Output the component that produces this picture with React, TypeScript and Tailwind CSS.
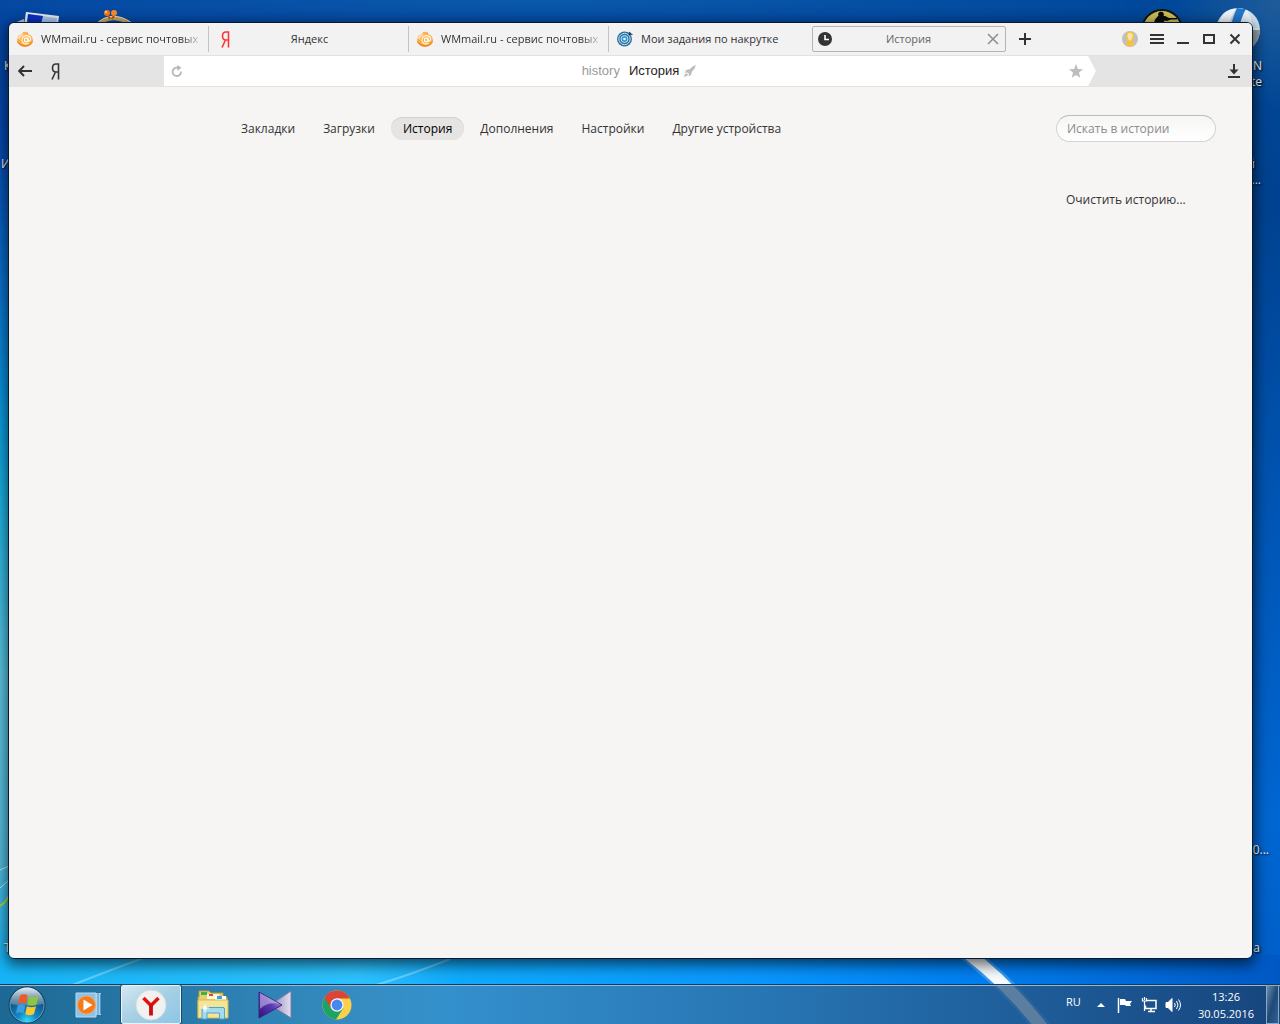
import type { ReactNode } from 'react';

const NAV_ITEMS = ['Закладки', 'Загрузки', 'История', 'Дополнения', 'Настройки', 'Другие устройства'];

function Wallpaper() {
  return (
    <svg
      className="absolute inset-0 h-full w-full"
      viewBox="0 0 1280 1024"
      preserveAspectRatio="none"
      aria-hidden="true"
    >
      <defs>
        <linearGradient id="wp-right" x1="0" y1="0" x2="0" y2="1">
          <stop offset="0" stopColor="#00489a" />
          <stop offset="0.2" stopColor="#004290" />
          <stop offset="0.5" stopColor="#0055b4" />
          <stop offset="0.8" stopColor="#0066d2" />
          <stop offset="1" stopColor="#005cc4" />
        </linearGradient>
        <linearGradient id="wp-left" x1="0" y1="0" x2="0" y2="1">
          <stop offset="0" stopColor="#0345a0" />
          <stop offset="0.14" stopColor="#0549b0" />
          <stop offset="0.28" stopColor="#0a74d0" />
          <stop offset="0.4" stopColor="#0a9ce2" />
          <stop offset="0.48" stopColor="#19b4e6" />
          <stop offset="0.66" stopColor="#5ecbe6" />
          <stop offset="0.84" stopColor="#55c0e2" />
          <stop offset="0.94" stopColor="#18b2f2" />
          <stop offset="1" stopColor="#10aef5" />
        </linearGradient>
        <linearGradient id="wp-bottom">
          <stop offset="0" stopColor="#16b4f6" />
          <stop offset="0.28" stopColor="#2cc0fc" />
          <stop offset="0.36" stopColor="#0fa9fb" />
          <stop offset="0.6" stopColor="#0895fc" />
          <stop offset="0.75" stopColor="#0080f0" />
          <stop offset="1" stopColor="#0058c4" />
        </linearGradient>
        <linearGradient id="wp-fade">
          <stop offset="0" stopColor="#fff" />
          <stop offset="0.35" stopColor="#fff" stopOpacity="0.9" />
          <stop offset="0.75" stopColor="#fff" stopOpacity="0.3" />
          <stop offset="0.95" stopColor="#fff" stopOpacity="0" />
        </linearGradient>
        <mask id="wp-mask">
          <rect width="1280" height="1024" fill="url(#wp-fade)" />
        </mask>
        <radialGradient id="wp-top" cx="0.42" cy="0" r="0.5">
          <stop offset="0" stopColor="#0b5cac" stopOpacity="0.9" />
          <stop offset="1" stopColor="#0b5cac" stopOpacity="0" />
        </radialGradient>
        <radialGradient id="wp-corner" cx="1280" cy="0" r="110" gradientUnits="userSpaceOnUse">
          <stop offset="0" stopColor="#1f5c99" />
          <stop offset="1" stopColor="#1f5c99" stopOpacity="0" />
        </radialGradient>
      </defs>
      <rect width="1280" height="1024" fill="url(#wp-right)" />
      <rect width="1280" height="1024" fill="url(#wp-left)" mask="url(#wp-mask)" />
      <rect y="955" width="1280" height="69" fill="url(#wp-bottom)" />
      <rect width="1280" height="60" fill="url(#wp-top)" />
      <rect x="1170" width="110" height="110" fill="url(#wp-corner)" />
      <path d="M946 938Q1000 973 1044 1030" fill="none" stroke="#7cc4ff" strokeWidth="17" opacity="0.4" />
      <path d="M946 938Q1000 973 1044 1030" fill="none" stroke="#fff" strokeWidth="12" opacity="0.95" />
      <path d="M70 986Q110 970 160 952M376 985Q410 975 450 959" fill="none" stroke="#a5e6ff" strokeWidth="2" opacity="0.5" />
      <path d="M0 888L9 880M0 870L9 866" fill="none" stroke="#c8f2fb" strokeWidth="1" />
      <path d="M0 906Q6 902 9 896" fill="none" stroke="#a9dc3c" strokeWidth="2" />
    </svg>
  );
}

function DesktopIcons() {
  return (
    <>
      <svg className="absolute left-3 top-2 h-6 w-12" viewBox="0 0 48 24" aria-hidden="true">
        <path d="M14 4L47 8L45 24H11z" fill="#e8ecef" />
        <path d="M16 6L45 10L43 24H14z" fill="#a9c9ee" />
        <path d="M16 6L31 8L27 24H14z" fill="#0b2fc0" />
        <path d="M2 15L12 11V24H2z" fill="#c7c9c3" />
      </svg>
      <svg className="absolute left-24 top-2 h-6 w-10" viewBox="0 0 40 24" aria-hidden="true">
        <path d="M0 18Q16 3 36 17" fill="none" stroke="#c6a468" strokeWidth="4" />
        <path d="M0 16Q16 1 36 15" fill="none" stroke="#f2dfb0" strokeWidth="1" />
        <path d="M11 6l3 5M19 6l-3 5" stroke="#b85a10" strokeWidth="2" />
        <circle cx="11" cy="5" r="3" fill="#f47a1c" />
        <circle cx="18" cy="5" r="3" fill="#f98a2a" />
        <circle cx="10" cy="4" r="1" fill="#ffd9a8" />
      </svg>
      <svg className="absolute right-24 top-2 h-10 w-11" viewBox="0 0 44 40" aria-hidden="true">
        <circle cx="22" cy="22" r="20" fill="#c9bd5c" stroke="#14140a" strokeWidth="2" />
        <circle cx="21" cy="6.500" r="2.800" fill="#0b0b06" />
        <path d="M18 8L25 8L29 10H37V11.500H31L27 13L24 12.500L25 18H13L15 11.500z" fill="#0b0b06" />
      </svg>
      <svg className="absolute right-5 top-2 h-11 w-11" viewBox="0 0 44 44" aria-hidden="true">
        <circle cx="22" cy="22" r="22" fill="#c9d8e5" />
        <path d="M22 0A22 22 0 0 1 43 22H20z" fill="#e9f2f9" />
        <path d="M21 0L30 1Q24 11 23 24H14Q16 10 21 0z" fill="#2478cc" />
        <path d="M8 5Q16 0 20 1Q14 9 12 22H2Q2 12 8 5z" fill="#eef6fb" />
        <path d="M31 2Q36 9 36 20L43 20Q42 8 31 2z" fill="#cfe2f2" />
        <path d="M36 22H44Q43 35 34 41z" fill="#9aa5ae" />
      </svg>
      <div className="text-xs leading-4 text-white [text-shadow:1px_1px_2px_#000]">
        <span className="absolute left-1 top-[58px]">К</span>
        <span className="absolute left-px top-[156px]">И</span>
        <span className="absolute left-1 top-[940px]">Т</span>
        <span className="absolute right-[18px] top-[58px] text-right">
          N<br />te
        </span>
        <span className="absolute right-[25px] top-[156px]">й</span>
        <span className="absolute right-[19px] top-[172px]">...</span>
        <span className="absolute right-[11px] top-[842px]">0...</span>
        <span className="absolute right-5 top-[940px]">а</span>
      </div>
    </>
  );
}

function MailIcon() {
  return (
    <svg className="h-4 w-4 shrink-0" viewBox="0 0 16 16" aria-hidden="true">
      <path d="M5.500 2L7 .5L8.500 1.500L10.500.5L11 3H5z" fill="#f7a64a" />
      <ellipse cx="8" cy="9" rx="8" ry="6.700" fill="#fbb04c" />
      <path d="M1 6.500Q3 2.700 8 2.500Q4 4.500 2.500 9z" fill="#fde0b0" />
      <path d="M0 9a8 6.700 0 0 0 16 0Q13 14 8 14Q3 14 0 9z" fill="#f28a1c" />
      <ellipse cx="9.200" cy="8.800" rx="1.700" ry="2" fill="none" stroke="#fff" strokeWidth="1.200" />
      <path d="M11.300 6.500L10.800 10Q13.500 10.500 13.700 8Q13.500 4.500 9.500 4.500Q5 5 5 9.300Q5.500 13 9.300 13L11.500 12.300" fill="none" stroke="#fff" strokeWidth="1.100" />
    </svg>
  );
}

function YaLetter({ className }: { className: string }) {
  return (
    <svg className={className} viewBox="0 0 9 17" fill="none" stroke="currentColor" aria-hidden="true">
      <path d="M7.500 16.500V1H5Q1.500 1 1.500 5Q1.500 9 5 9H7.500M4.500 9L1 16.500" strokeWidth="1.600" />
    </svg>
  );
}

function TargetIcon() {
  return (
    <svg className="h-4 w-4 shrink-0" viewBox="0 0 16 16" aria-hidden="true">
      <circle cx="7.500" cy="8" r="7.500" fill="#2a6f9e" />
      <circle cx="7.500" cy="8" r="5.700" fill="none" stroke="#c4e5f5" strokeWidth="1" />
      <circle cx="7.500" cy="8" r="3.500" fill="#3a92c9" stroke="#c4e5f5" strokeWidth="1" />
      <circle cx="7.500" cy="8" r="1.300" fill="#e9f7fd" />
      <path d="M12 4L14 2M12 1l1 2 2.500.5" stroke="#163c55" strokeWidth="1.200" fill="none" />
    </svg>
  );
}

function ClockIcon() {
  return (
    <svg className="h-3.5 w-3.5 shrink-0" viewBox="0 0 14 14" aria-hidden="true">
      <circle cx="7" cy="7" r="7" fill="#333" />
      <path d="M7 3v4.500h4" fill="none" stroke="#fff" strokeWidth="1.600" />
    </svg>
  );
}

interface TabProps {
  icon: ReactNode;
  title: string;
  centered?: boolean;
  faded?: boolean;
  last?: boolean;
}

function Tab({ icon, title, centered, faded, last }: TabProps) {
  return (
    <button
      type="button"
      className={`flex h-[26px] w-[200px] min-w-0 items-center gap-2 pl-2 pr-1.5 ${
        last ? '' : 'border-r border-[#c3c3c3]'
      }`}
    >
      {icon}
      <span
        className={`min-w-0 flex-1 overflow-hidden whitespace-nowrap ${
          centered ? 'pr-6 text-center' : 'text-left'
        } ${faded ? '[mask-image:linear-gradient(to_right,#000_88%,transparent)]' : ''}`}
      >
        {title}
      </span>
    </button>
  );
}

function TabBar() {
  return (
    <div className="flex h-8 items-center bg-[#f2f2f2] text-[11px] text-[#333]">
      <div className="flex min-w-0 flex-1 items-center">
        <Tab icon={<MailIcon />} title="WMmail.ru - сервис почтовых" faded />
        <Tab
          icon={
            <span className="flex w-4 shrink-0 justify-center">
              <YaLetter className="h-[17px] w-[9px] text-[#f33]" />
            </span>
          }
          title="Яндекс"
          centered
        />
        <Tab icon={<MailIcon />} title="WMmail.ru - сервис почтовых" faded />
        <Tab icon={<TargetIcon />} title="Мои задания по накрутке" last />
        <div className="ml-[3px] flex h-[26px] w-[194px] min-w-0 items-center rounded-xs border border-[#b5b5b5] pl-[5px] pr-1">
          <ClockIcon />
          <button type="button" className="min-w-0 flex-1 truncate text-center text-[#666]">
            История
          </button>
          <button type="button" aria-label="Закрыть вкладку" className="px-0.5">
            <svg className="h-3 w-3" viewBox="0 0 12 12" stroke="#8c8c8c" strokeWidth="1.500" aria-hidden="true">
              <path d="M1 1l10 10M11 1L1 11" />
            </svg>
          </button>
        </div>
        <button type="button" aria-label="Новая вкладка" className="ml-3 p-px">
          <svg className="h-3 w-3" viewBox="0 0 12 12" stroke="#333" strokeWidth="2" aria-hidden="true">
            <path d="M6 0v12M0 6h12" />
          </svg>
        </button>
      </div>
      <div className="flex shrink-0 items-center gap-3 pr-2.5">
        <button type="button" aria-label="Профиль">
          <svg className="h-4 w-4" viewBox="0 0 16 16" aria-hidden="true">
            <circle cx="8" cy="8" r="8" fill="#c0c0c0" />
            <path d="M4 5Q4 .7 8 .7Q12 .7 12 5Q12 8.500 10 10.300Q10 11.300 13 12.500Q11 15.500 8 15.500Q5 15.500 3 12.500Q6 11.300 6 10.300Q4 8.500 4 5z" fill="#f6c23e" />
            <path d="M5.300 5Q5.500 2 8 2Q10.500 2 10.500 5Q10.500 7.500 8 10Q5.500 7.500 5.300 5z" fill="#fde7a6" />
          </svg>
        </button>
        <button type="button" aria-label="Меню">
          <svg className="h-3.5 w-3.5" viewBox="0 0 14 14" stroke="#333" strokeWidth="2" aria-hidden="true">
            <path d="M0 3h14M0 7h14M0 11h14" />
          </svg>
        </button>
        <button type="button" aria-label="Свернуть">
          <svg className="h-3.5 w-3.5" viewBox="0 0 14 14" stroke="#333" strokeWidth="2" aria-hidden="true">
            <path d="M1 11h12" />
          </svg>
        </button>
        <button type="button" aria-label="Развернуть">
          <svg className="h-3.5 w-3.5" viewBox="0 0 14 14" fill="none" stroke="#333" strokeWidth="2" aria-hidden="true">
            <path d="M2 3h10v8H2z" />
          </svg>
        </button>
        <button type="button" aria-label="Закрыть">
          <svg className="h-3.5 w-3.5" viewBox="0 0 14 14" stroke="#333" strokeWidth="2" aria-hidden="true">
            <path d="M2.500 2.500l9 9M11.500 2.500l-9 9" />
          </svg>
        </button>
      </div>
    </div>
  );
}

function AddressBar() {
  return (
    <div className="flex h-8 border-y border-[#e2e2e2] bg-[#e4e4e4] text-[#333]">
      <div className="flex w-[155px] shrink-0 items-center gap-[19px] pl-[9px]">
        <button type="button" aria-label="Назад">
          <svg className="h-3 w-3.5" viewBox="0 0 14 12" fill="none" stroke="#333" strokeWidth="2" aria-hidden="true">
            <path d="M14 6H1.500M6 1L1.200 6L6 11" />
          </svg>
        </button>
        <button type="button" aria-label="Яндекс">
          <YaLetter className="h-[17px] w-[9px]" />
        </button>
      </div>
      <div className="flex min-w-0 flex-1 items-center bg-white pl-[7px] pr-[5px]">
        <button type="button" aria-label="Обновить">
          <svg className="h-3 w-3" viewBox="0 0 12 12" fill="none" stroke="#b8b8b8" strokeWidth="1.800" aria-hidden="true">
            <path d="M10 6.500A4.200 4.200 0 1 1 6 2.600H9" />
            <path d="M6 0l4.500 2.800L6.500 6z" fill="#b8b8b8" stroke="none" />
          </svg>
        </button>
        <div className="flex min-w-0 flex-1 items-center justify-center pl-[26px] font-['Liberation_Sans',sans-serif] text-[13px]">
          <span className="text-[#999]">history</span>
          <span className="ml-[9px] text-[#222]">История</span>
          <svg className="ml-[5px] h-3 w-3" viewBox="0 0 12 12" fill="#bdbdbd" aria-hidden="true">
            <path d="M12 0Q8 1 6 4L2 5L1 8L3.500 7.500L5 9L4.500 11.500L7 10L8 6.500Q11 4 12 0z" />
            <path d="M0 12L1 9L3 8.500L4 9.500L3 11z" />
          </svg>
        </div>
        <button type="button" aria-label="Добавить в закладки">
          <svg className="h-3.5 w-3.5" viewBox="0 0 14 14" fill="#bdbdbd" aria-hidden="true">
            <path d="M7 0l1.900 4.900L14 5.300l-4 3.300 1.300 5.200L7 11l-4.300 2.800L4 8.600 0 5.300l5.100-.4z" />
          </svg>
        </button>
      </div>
      <svg className="h-full w-2 shrink-0" viewBox="0 0 8 30" preserveAspectRatio="none" fill="#fff" aria-hidden="true">
        <path d="M0 0L8 15L0 30z" />
      </svg>
      <div className="flex w-[156px] shrink-0 items-center justify-end pr-3">
        <button type="button" aria-label="Загрузки">
          <svg className="h-3.5 w-3" viewBox="0 0 12 14" stroke="#333" strokeWidth="2" aria-hidden="true">
            <path d="M6 0v8M0 13h12" />
            <path d="M1.500 5.500h9L6 10.500z" fill="#333" stroke="none" />
          </svg>
        </button>
      </div>
    </div>
  );
}

function HistoryPage() {
  return (
    <main className="flex-1 bg-[#f6f5f3] pl-[220px] pr-9 pt-7 text-xs text-[#333]">
      <div className="flex items-center justify-between">
        <nav className="flex gap-1">
          {NAV_ITEMS.map((item) => (
            <a
              key={item}
              href="#"
              className={`rounded-full px-3 pt-px leading-[22px] ${
                item === 'История' ? 'bg-[#e5e4e2] text-black shadow-[inset_0_1px_0_#d3d2d0]' : ''
              }`}
            >
              {item}
            </a>
          ))}
        </nav>
        <input
          type="search"
          aria-label="Искать в истории"
          placeholder="Искать в истории"
          className="h-[27px] w-40 rounded-full border border-[#d4d4d2] border-t-[#bcbcba] bg-linear-to-b from-[#f6f6f5] to-white px-2.5 placeholder:text-[#8c8c8c]"
        />
      </div>
      <div className="mt-[50px] flex justify-end">
        <div className="w-[150px]">
          <button type="button">Очистить историю...</button>
        </div>
      </div>
    </main>
  );
}

function StartOrb() {
  return (
    <svg className="h-[38px] w-[38px]" viewBox="0 0 38 38" aria-hidden="true">
      <defs>
        <radialGradient id="orb" cx="0.5" cy="0.95" r="0.8">
          <stop offset="0" stopColor="#2fe0ff" />
          <stop offset="0.35" stopColor="#1086c4" />
          <stop offset="1" stopColor="#124168" />
        </radialGradient>
        <linearGradient id="orb-shine" x1="0" y1="0" x2="0" y2="1">
          <stop offset="0" stopColor="#e8f0f5" />
          <stop offset="1" stopColor="#7f9fb5" stopOpacity="0.5" />
        </linearGradient>
      </defs>
      <circle cx="19" cy="19" r="18" fill="url(#orb)" stroke="#173d58" strokeWidth="1" />
      <circle cx="19" cy="19" r="17" fill="none" stroke="#7cb8d6" strokeWidth="1" opacity="0.7" />
      <path d="M2.500 18A16.500 16.500 0 0 1 35.500 18Q19 21 2.500 18z" fill="url(#orb-shine)" />
      <path d="M12 9.500Q16 7 19.500 9.500L17.800 18Q14 15.500 10 18z" fill="#ee5a24" />
      <path d="M21 10Q25.500 12.500 30.500 10L28.500 18.500Q24 21 19.200 18.500z" fill="#8ec63f" />
      <path d="M9.500 19.500Q13.500 17.500 17.200 19.700L15.500 27.500Q12 25.500 8 27.500z" fill="#3d9be0" />
      <path d="M18.900 20.200Q23.500 22.500 28 20.200L26 28Q22 30.500 17.200 28.200z" fill="#fbc928" />
    </svg>
  );
}

function MediaPlayerIcon() {
  return (
    <svg className="h-7 w-7" viewBox="0 0 28 28" aria-hidden="true">
      <path d="M20 2h6v22h-6z" fill="#a8d0ea" />
      <path d="M23 2v22M25.500 3v20" stroke="#4f97c8" strokeWidth="1" />
      <path d="M1 2h20v24H1z" fill="#8fc3e6" stroke="#b8dbf2" />
      <circle cx="11.500" cy="14" r="9" fill="#f47a1c" stroke="#fba55c" />
      <path d="M8.500 8.500L17.500 14L8.500 19.500z" fill="#fff" />
    </svg>
  );
}

function YandexIcon() {
  return (
    <svg className="h-8 w-8" viewBox="0 0 32 32" aria-hidden="true">
      <circle cx="16" cy="16" r="15" fill="#f1f1f1" stroke="#d3dde2" />
      <path d="M8.500 9L16 16.500L23.500 9" fill="none" stroke="#e3120b" strokeWidth="3.500" />
      <path d="M16 15.500v11" stroke="#c90d0d" strokeWidth="3.800" />
    </svg>
  );
}

function ExplorerIcon() {
  return (
    <svg className="h-8 w-[34px]" viewBox="0 0 34 32" aria-hidden="true">
      <path d="M3 8V2h10l2 2h12v4h4v20H2V8z" fill="#e8cf74" stroke="#b89a3c" />
      <path d="M5 3h6v3H5z" fill="#38b83a" />
      <path d="M11 5h12v5H11z" fill="#faf5dc" />
      <path d="M13 5h4v2h-4z" fill="#d94a30" />
      <path d="M19 7h11v4H19z" fill="#fff" />
      <path d="M21 7h5v3h-5z" fill="#3ba2e2" />
      <path d="M2 11h30v18H2z" fill="#f4e496" stroke="#d5b851" />
      <path d="M6 30V20q0-1.500 1.500-1.500H27q1.500 0 1.500 1.500v10h-5v-6H11v6z" fill="#a4dcef" stroke="#4ca5cc" />
      <path d="M9 15v8M5 19h8" stroke="#fff" strokeWidth="1" />
      <circle cx="9" cy="19" r="2" fill="#fff" />
    </svg>
  );
}

function KmIcon() {
  return (
    <svg className="h-[30px] w-[34px]" viewBox="0 0 34 30" aria-hidden="true">
      <defs>
        <linearGradient id="km" x1="0" y1="1" x2="1" y2="0">
          <stop offset="0" stopColor="#2e1274" />
          <stop offset="0.5" stopColor="#5b3ab5" />
          <stop offset="1" stopColor="#c9c0f0" />
        </linearGradient>
        <linearGradient id="km-r">
          <stop offset="0" stopColor="#8c80b8" />
          <stop offset="1" stopColor="#e2e0ee" />
        </linearGradient>
      </defs>
      <path d="M33 1V28L12 15z" fill="url(#km-r)" stroke="#82749c" />
      <path d="M1 2L24 15L1 28z" fill="url(#km)" stroke="#3c2383" />
      <path d="M2 3L22 14Q10 11 2 19z" fill="#fff" opacity="0.4" />
    </svg>
  );
}

function ChromeLogo() {
  return (
    <svg className="h-[30px] w-[30px]" viewBox="0 0 30 30" aria-hidden="true">
      <circle cx="15" cy="15" r="14.500" fill="#fdd04a" />
      <path d="M15 15L2.500 7.700A14.500 14.500 0 0 0 14 29.500L21.500 18z" fill="#1da362" />
      <path d="M2.500 7.700A14.500 14.500 0 0 1 28 8.500H15L9 18z" fill="#db4437" />
      <circle cx="15" cy="15" r="6.700" fill="#f5f5f5" />
      <circle cx="15" cy="15" r="5.400" fill="#4688f1" />
    </svg>
  );
}

const APPS = [
  { name: 'Windows Media Player', icon: <MediaPlayerIcon /> },
  { name: 'Yandex', icon: <YandexIcon />, active: true },
  { name: 'Проводник', icon: <ExplorerIcon /> },
  { name: 'KMPlayer', icon: <KmIcon /> },
  { name: 'Google Chrome', icon: <ChromeLogo /> },
];

function Tray() {
  return (
    <div className="flex h-full items-center text-[11px] text-white">
      <span className="mr-4 pb-1">RU</span>
      <button type="button" aria-label="Показать скрытые значки" className="mr-3">
        <svg className="h-2 w-2" viewBox="0 0 8 8" fill="#fff" aria-hidden="true">
          <path d="M4 2l4 4H0z" />
        </svg>
      </button>
      <button type="button" aria-label="Центр поддержки" className="mr-2">
        <svg className="h-4 w-4" viewBox="0 0 16 16" aria-hidden="true">
          <path d="M1.500 1v15" stroke="#fff" strokeWidth="1.500" />
          <path d="M3 2h5l1 2h6l-2 3 1 2H9L8 8H3z" fill="#fff" />
        </svg>
      </button>
      <button type="button" aria-label="Сеть" className="mr-2">
        <svg className="h-4 w-4" viewBox="0 0 16 16" fill="none" stroke="#fff" aria-hidden="true">
          <path d="M6 3.500h9v8H4.500v-3" strokeWidth="1.500" />
          <path d="M7 14.500h7M10 12v2" strokeWidth="1.500" />
          <path d="M1.500 1v3h4V1M3.500 0v3M3.500 4v10" strokeWidth="1.200" />
        </svg>
      </button>
      <button type="button" aria-label="Громкость" className="mr-[17px]">
        <svg className="h-4 w-4" viewBox="0 0 16 16" fill="none" stroke="#fff" aria-hidden="true">
          <path d="M1 5.500h2L7 1.500v13l-4-4H1z" fill="#fff" />
          <path d="M9.500 6q1.500 2 0 4M11.500 4q3 4 0 8M13.500 2.500q4 5.500 0 11" strokeWidth="1" />
        </svg>
      </button>
      <time className="mr-3 text-center leading-[17px]">
        13:26
        <br />
        30.05.2016
      </time>
      <button
        type="button"
        aria-label="Показать рабочий стол"
        className="mr-px h-full w-[13px] border border-[#8aa7c4] bg-linear-to-br from-[#6d8cab] via-[#1d4a78] to-[#34618f]"
      />
    </div>
  );
}

function Taskbar() {
  return (
    <footer className="relative flex h-10 items-center justify-between border-t border-[#173a5c] bg-linear-to-r from-[#1f567c]/80 via-[#3f87bd]/75 via-35% to-[#1f3f66]/75 shadow-[inset_0_1px_0_#8fbcd9]">
      <div className="flex h-full items-center">
        <button type="button" aria-label="Пуск" className="mr-[13px] pl-2">
          <StartOrb />
        </button>
        <div className="flex h-full gap-0.5">
          {APPS.map((app) => (
            <button
              key={app.name}
              type="button"
              aria-label={app.name}
              className={`flex h-full w-[60px] items-center justify-center ${
                app.active
                  ? 'rounded-xs border border-[#e6f4fb] bg-linear-to-br from-[#d5e7f0] via-[#a5cfe4] to-[#8cc6e6] outline outline-[#1d4b6b]'
                  : ''
              }`}
            >
              {app.icon}
            </button>
          ))}
        </div>
      </div>
      <Tray />
    </footer>
  );
}

export default function App() {
  return (
    <div className="relative flex min-h-screen flex-col overflow-hidden bg-[#00489a] font-['Open_Sans',sans-serif]">
      <Wallpaper />
      <DesktopIcons />
      <div className="relative mb-[25px] ml-2 mr-[27px] mt-[22px] flex flex-1 flex-col overflow-hidden rounded-md border border-[#061a33] shadow-[0_4px_14px_2px_rgba(0,0,0,0.6)]">
        <TabBar />
        <AddressBar />
        <HistoryPage />
      </div>
      <Taskbar />
    </div>
  );
}
